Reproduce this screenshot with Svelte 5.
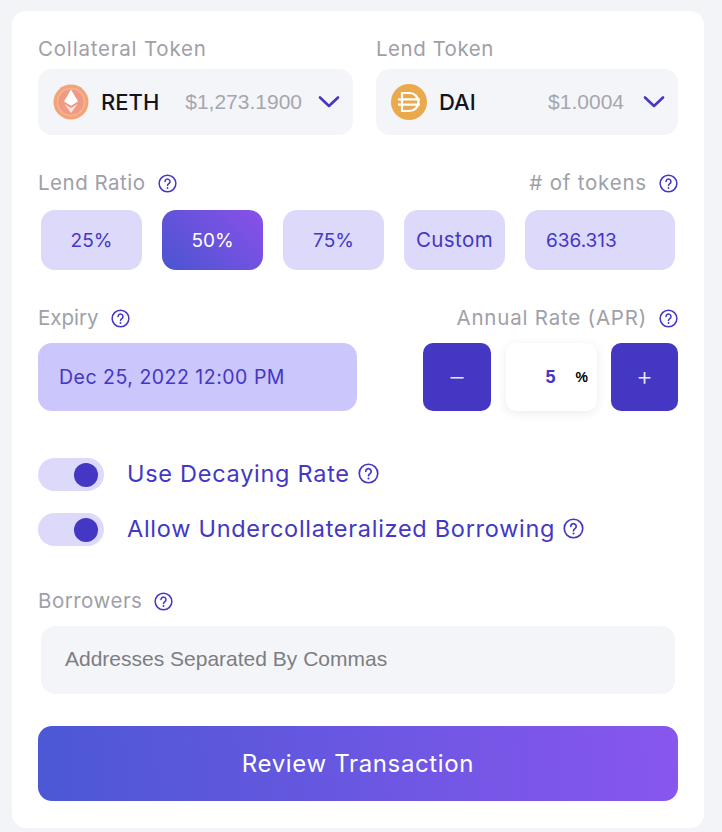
<script lang="ts">
    const ratios = [
        { label: "25%", active: false },
        { label: "50%", active: true },
        { label: "75%", active: false },
        { label: "Custom", active: false },
    ];
    const toggles = ["Use Decaying Rate", "Allow Undercollateralized Borrowing"];
</script>

{#snippet help()}
    <svg class="help" viewBox="0 0 20 20" fill="none" aria-hidden="true">
        <circle cx="10" cy="10" r="8.8" stroke="#4337c4" stroke-width="1.6" />
        <path d="M7.4 8a2.6 2.6 0 1 1 4 2.1c-.9.6-1.4 1-1.4 2" stroke="#4337c4" stroke-width="1.6" stroke-linecap="round" />
        <circle cx="10" cy="14.8" r="1" fill="#4337c4" />
    </svg>
{/snippet}

{#snippet chevron()}
    <svg class="chevron" viewBox="0 0 22 14" width="22" height="14" fill="none" aria-hidden="true">
        <path d="M2 2.5l9 8.5 9-8.5" stroke="#4337c4" stroke-width="2.6" stroke-linecap="round" stroke-linejoin="round" />
    </svg>
{/snippet}

<main class="card">
    <section class="tokens">
        <div class="field collateral">
            <span class="label">Collateral Token</span>
            <div class="select">
                <svg class="coin" viewBox="0 0 36 36" width="36" height="36" aria-hidden="true">
                    <circle cx="18" cy="18" r="17.5" fill="#f2a477" />
                    <circle cx="18" cy="18" r="13.5" fill="#ee9a86" stroke="#f6b48f" stroke-width="1.5" />
                    <path d="M18 5.5l7 12-7 4.2-7-4.2z" fill="#fff" />
                    <path d="M11.4 20L18 24l6.6-4L18 29z" fill="#fde3dc" />
                </svg>
                <span class="symbol">RETH</span>
                <span class="price">$1,273.1900</span>
                {@render chevron()}
            </div>
        </div>
        <div class="field lend">
            <span class="label snug">Lend Token</span>
            <div class="select">
                <svg class="coin" viewBox="0 0 36 36" width="36" height="36" aria-hidden="true">
                    <circle cx="18" cy="18" r="18" fill="#e9a94c" />
                    <path d="M11 9h7.5a9 9 0 0 1 0 18H11z" fill="none" stroke="#fff" stroke-width="2.2" />
                    <path d="M7 15.3h22M7 20.7h22" stroke="#fff" stroke-width="2.2" />
                </svg>
                <span class="symbol">DAI</span>
                <span class="price">$1.0004</span>
                {@render chevron()}
            </div>
        </div>
    </section>

    <section class="ratio">
        <div class="label-row">
            <span class="label with-help snug">Lend Ratio {@render help()}</span>
            <span class="label with-help">
                # of tokens {@render help()}
            </span>
        </div>
        <div class="chips">
            {#each ratios as ratio (ratio.label)}
                <button class="chip" class:active={ratio.active} class:word={ratio.label === "Custom"}>{ratio.label}</button>
            {/each}
            <div class="chip amount">636.313</div>
        </div>
    </section>

    <section class="expiry">
        <div class="label-row">
            <span class="label with-help tight">Expiry {@render help()}</span>
            <span class="label with-help">Annual Rate (APR) {@render help()}</span>
        </div>
        <div class="expiry-controls">
            <div class="date">Dec 25, 2022 12:00 PM</div>
            <div class="stepper">
                <button class="step minus">–</button>
                <div class="rate">
                    <span class="rate-value">5</span>
                    <span class="rate-unit">%</span>
                </div>
                <button class="step plus">+</button>
            </div>
        </div>
    </section>

    <section class="toggles">
        {#each toggles as toggle (toggle)}
            <div class="toggle-row">
                <span class="toggle"><span class="knob"></span></span>
                <span class="toggle-label">{toggle}</span>
                {@render help()}
            </div>
        {/each}
    </section>

    <section class="borrowers">
        <span class="label with-help snug">Borrowers {@render help()}</span>
        <div class="address">Addresses Separated By Commas</div>
    </section>

    <button class="review">Review Transaction</button>
</main>

<style>
    :global(body) {
        background: #f3f4f8;
        font-family: "Inter", "Noto Sans", sans-serif;
    }

    .card {
        box-sizing: border-box;
        width: 692px;
        height: 817px;
        margin: 11px 0 0 12px;
        padding: 26px 26px 0;
        background: #fff;
        border-radius: 14px;
    }

    .label {
        font-size: 20.5px;
        line-height: 24px;
        color: #a0a0a8;
        letter-spacing: 0.8px;
    }

    .label.snug {
        letter-spacing: 0.5px;
    }

    .label.tight {
        letter-spacing: 0;
    }

    .with-help {
        display: inline-flex;
        align-items: center;
        gap: 12px;
    }

    .help {
        flex: none;
        width: 19px;
        height: 19px;
    }

    .tokens {
        display: grid;
        grid-template-columns: 315px 302px;
        justify-content: space-between;
    }

    .field {
        display: flex;
        flex-direction: column;
        gap: 8px;
    }

    .select {
        box-sizing: border-box;
        height: 66px;
        display: flex;
        align-items: center;
        padding: 0 13px 0 15px;
        background: #f4f5f9;
        border-radius: 14px;
    }

    .coin {
        flex: none;
    }

    .symbol {
        margin-left: 12px;
        font-size: 22px;
        font-weight: 500;
        color: #14141f;
    }

    .price {
        margin-left: auto;
        margin-right: 16px;
        font-family: "Liberation Sans", Arial, sans-serif;
        font-size: 21px;
        color: #a6a6ae;
    }

    .lend .price {
        margin-right: 19px;
    }

    .ratio {
        margin-top: 36px;
    }

    .label-row {
        display: flex;
        justify-content: space-between;
        align-items: center;
    }

    .chips {
        display: flex;
        gap: 20px;
        margin: 15px 3px 0;
    }

    .chip {
        box-sizing: border-box;
        width: 101px;
        height: 60px;
        display: flex;
        align-items: center;
        justify-content: center;
        border: 0;
        border-radius: 14px;
        background: #dcd9fb;
        color: #4337c4;
        font: inherit;
        font-size: 19px;
    }

    .chip.word {
        padding-bottom: 2px;
        font-size: 20.5px;
        letter-spacing: 0.4px;
    }

    .chip.active {
        background: linear-gradient(45deg, #4a55d0, #8a50ea);
        color: #fff;
    }

    .amount {
        width: 150px;
        justify-content: flex-start;
        padding-left: 21px;
    }

    .expiry {
        margin-top: 36px;
    }

    .expiry-controls {
        display: flex;
        justify-content: space-between;
        margin-top: 13px;
    }

    .date {
        box-sizing: border-box;
        width: 319px;
        height: 68px;
        display: flex;
        align-items: center;
        padding-left: 21px;
        background: #cbc6fb;
        border-radius: 14px;
        color: #4337c4;
        font-size: 19.5px;
        letter-spacing: 0.5px;
    }

    .stepper {
        display: flex;
        gap: 14px;
    }

    .step {
        width: 68px;
        height: 68px;
        padding: 0 0 2px;
        border: 0;
        border-radius: 10px;
        background: #4337c4;
        color: #e8e6fb;
        font: inherit;
        font-size: 26px;
        font-weight: 300;
    }

    .step.plus {
        width: 67px;
        padding-bottom: 4px;
    }

    .rate {
        width: 91px;
        height: 68px;
        margin-left: 1px;
        display: flex;
        align-items: center;
        justify-content: flex-end;
        gap: 20px;
        padding-right: 9px;
        box-sizing: border-box;
        background: #fff;
        border-radius: 10px;
        box-shadow: 0 2px 10px rgba(60, 60, 100, 0.1);
        font-family: "Liberation Sans", Arial, sans-serif;
        font-weight: 700;
    }

    .rate-value {
        font-size: 18px;
        color: #4337c4;
    }

    .rate-unit {
        font-size: 14px;
        color: #000;
    }

    .toggles {
        display: flex;
        flex-direction: column;
        gap: 22px;
        margin-top: 47px;
    }

    .toggle-row {
        display: flex;
        align-items: center;
        gap: 8px;
        height: 33px;
    }

    .toggle-row .help {
        width: 21px;
        height: 21px;
        margin-bottom: 2px;
    }

    .toggle {
        width: 66px;
        height: 33px;
        margin-right: 15px;
        display: flex;
        align-items: center;
        justify-content: flex-end;
        padding-right: 6px;
        box-sizing: border-box;
        background: #dcd9fb;
        border-radius: 17px;
    }

    .knob {
        width: 24px;
        height: 24px;
        border-radius: 50%;
        background: #4337c4;
    }

    .toggle-label {
        margin-bottom: 2px;
        font-size: 23.5px;
        color: #4337c4;
        letter-spacing: 0.72px;
    }

    .borrowers {
        margin-top: 43px;
    }

    .address {
        box-sizing: border-box;
        height: 68px;
        margin: 13px 3px 0;
        display: flex;
        align-items: center;
        padding: 0 0 2px 24px;
        background: #f4f5f9;
        border-radius: 14px;
        font-family: "Liberation Sans", Arial, sans-serif;
        font-size: 21px;
        color: #7d7d82;
    }

    .review {
        display: block;
        width: 640px;
        height: 75px;
        margin-top: 32px;
        border: 0;
        border-radius: 14px;
        background: linear-gradient(85deg, #4b58d5, #8956ee);
        color: #fff;
        font: inherit;
        font-size: 24px;
        letter-spacing: 0.64px;
    }
</style>
